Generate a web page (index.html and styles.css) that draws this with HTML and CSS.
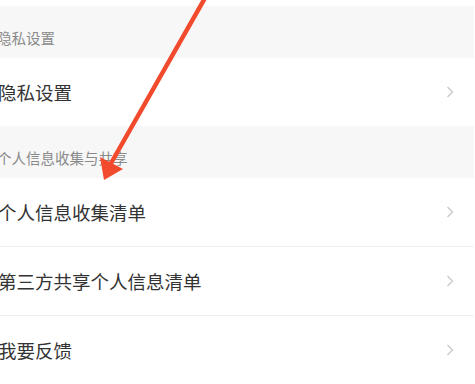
FILE: index.html
```html
<!DOCTYPE html>
<html lang="zh-CN">
<head>
<meta charset="utf-8">
<link rel="stylesheet" href="styles.css">
</head>
<body>
<div class="page">
  <div class="top"></div>
  <div class="section-title"><span>隐私设置</span></div>
  <div class="row"><span class="label">隐私设置</span><svg class="chev" viewBox="0 0 8 12"><path d="M1.5 1 L6.5 6 L1.5 11" /></svg></div>
  <div class="section-title"><span>个人信息收集与共享</span></div>
  <div class="row bordered"><span class="label">个人信息收集清单</span><svg class="chev" viewBox="0 0 8 12"><path d="M1.5 1 L6.5 6 L1.5 11" /></svg></div>
  <div class="row bordered"><span class="label">第三方共享个人信息清单</span><svg class="chev" viewBox="0 0 8 12"><path d="M1.5 1 L6.5 6 L1.5 11" /></svg></div>
  <div class="row"><span class="label">我要反馈</span><svg class="chev" viewBox="0 0 8 12"><path d="M1.5 1 L6.5 6 L1.5 11" /></svg></div>
  <svg class="arrow" viewBox="0 0 475 384" width="475" height="384">
    <line x1="205" y1="-2" x2="110" y2="165" />
    <polygon points="104,180 100,157 123,169" />
  </svg>
</div>
</body>
</html>
```

FILE: styles.css
```css
html, body {
  margin: 0;
  padding: 0;
  background: #ffffff;
}
body {
  width: 475px;
  height: 384px;
  overflow: hidden;
  font-family: "Noto Sans CJK SC", "Noto Sans", sans-serif;
}
.page {
  position: relative;
  width: 474px;
  height: 384px;
  overflow: hidden;
}
.top {
  height: 6px;
  background: #ffffff;
}
.section-title {
  height: 52px;
  background: #f7f7f7;
  display: flex;
  align-items: flex-end;
  padding-bottom: 10px;
  box-sizing: border-box;
}
.section-title span {
  margin-left: -3px;
  font-size: 14.5px;
  line-height: 20px;
  color: #8a8a8a;
  white-space: nowrap;
}
.row {
  height: 68px;
  display: flex;
  align-items: center;
  justify-content: space-between;
  background: #ffffff;
}
.row.bordered {
  border-bottom: 1px solid #efefef;
}
.label {
  margin-left: -2px;
  font-size: 18.5px;
  color: #333333;
  white-space: nowrap;
}
.chev {
  width: 8px;
  height: 12px;
  margin-right: 20px;
  fill: none;
  stroke: #c9c9c9;
  stroke-width: 1.3;
}
.arrow {
  position: absolute;
  left: 0;
  top: 0;
  pointer-events: none;
}
.arrow line {
  stroke: #f24a2c;
  stroke-width: 4.5;
  stroke-linecap: round;
}
.arrow polygon {
  fill: #f24a2c;
}
```
